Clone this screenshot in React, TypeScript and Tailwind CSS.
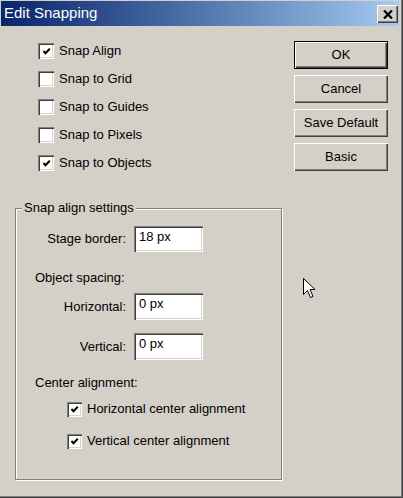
const sunken =
  "shadow-[inset_1px_1px_#808080,inset_2px_2px_#404040,inset_-1px_-1px_#ffffff,inset_-2px_-2px_#d4d0c8]";
const raised =
  "shadow-[inset_1px_1px_#ffffff,inset_-1px_-1px_#404040,inset_-2px_-2px_#808080]";

function Check({ checked, size }: { checked: boolean; size: number }) {
  return (
    <div
      className={`flex shrink-0 items-center justify-center bg-white ${sunken}`}
      style={{ width: size, height: size }}
    >
      {checked && (
        <svg width="9" height="9" viewBox="0 0 9 9">
          <polyline points="1.5,4 3.5,6.3 7.8,1.8" fill="none" stroke="#000" strokeWidth="2" />
        </svg>
      )}
    </div>
  );
}

function CheckRow({ label, checked }: { label: string; checked: boolean }) {
  return (
    <div className="flex h-[28px] items-center gap-[5px] pl-[23px]">
      <Check checked={checked} size={16} />
      <span>{label}</span>
    </div>
  );
}

function Field({ label, value, h }: { label: string; value: string; h: string }) {
  return (
    <div className="flex items-center">
      <span className="w-[110px] text-right">{label}</span>
      <div className={`ml-[8px] w-[69px] ${h} bg-white pl-[5px] pt-[3px] leading-[16px] ${sunken}`}>
        {value}
      </div>
    </div>
  );
}

function Btn({ label, isDefault }: { label: string; isDefault?: boolean }) {
  return (
    <div
      className={`flex h-[28px] w-[94px] items-center justify-center ${
        isDefault ? "border border-black" : ""
      }`}
    >
      <div className={`flex h-full w-full items-center justify-center bg-[#d4d0c8] ${raised}`}>
        {label}
      </div>
    </div>
  );
}

export default function App() {
  return (
    <div className="relative h-[498px] w-[403px] overflow-hidden bg-[#d4d0c8] pl-px pt-px font-['Liberation_Sans',Arial,sans-serif] text-[13px] text-black shadow-[inset_-1px_-1px_#404040,inset_-2px_-2px_#808080]">
      {/* title bar */}
      <div className="flex h-[25px] w-[398px] items-start bg-linear-to-r from-[#0a246a] to-[#a6caf0]">
        <span className="ml-[3px] mt-[3px] text-[15px] leading-[18px] text-white">Edit Snapping</span>
        <div
          className={`ml-auto mr-px mt-[4px] flex h-[18px] w-[21px] items-center justify-center bg-[#d4d0c8] ${raised}`}
        >
          <svg width="10" height="9" viewBox="0 0 10 9">
            <path d="M1 0.5 L9 8.5 M9 0.5 L1 8.5" stroke="#000" strokeWidth="2.2" />
          </svg>
        </div>
      </div>

      <div className="flex pl-[14px] pt-[11px]">
        {/* left column */}
        <div className="w-[268px]">
          <CheckRow label="Snap Align" checked />
          <CheckRow label="Snap to Grid" checked={false} />
          <CheckRow label="Snap to Guides" checked={false} />
          <CheckRow label="Snap to Pixels" checked={false} />
          <CheckRow label="Snap to Objects" checked />

          <div className="relative mt-[31px] h-[272px] w-[267px] border border-[#808080] shadow-[inset_1px_1px_#ffffff,1px_1px_#ffffff]">
            <span className="absolute left-[6px] top-[-9px] bg-[#d4d0c8] px-[2px] leading-[16px]">
              Snap align settings
            </span>
            <div className="pt-[17px]">
              <Field label="Stage border:" value="18 px" h="h-[26px]" />
              <div className="mt-[18px] h-[16px] pl-[19px] leading-[16px]">Object spacing:</div>
              <div className="mt-[7px]">
                <Field label="Horizontal:" value="0 px" h="h-[27px]" />
              </div>
              <div className="mt-[13px]">
                <Field label="Vertical:" value="0 px" h="h-[27px]" />
              </div>
              <div className="mt-[15px] h-[16px] pl-[19px] leading-[16px]">Center alignment:</div>
              <div className="mt-[2px] pl-[51px]">
                <div className="flex h-[32px] items-center gap-[5px]">
                  <Check checked size={15} />
                  <span>Horizontal center alignment</span>
                </div>
                <div className="flex h-[32px] items-center gap-[5px]">
                  <Check checked size={15} />
                  <span>Vertical center alignment</span>
                </div>
              </div>
            </div>
          </div>
        </div>

        {/* buttons */}
        <div className="ml-[11px] mt-[4px] flex flex-col gap-[6px]">
          <Btn label="OK" isDefault />
          <Btn label="Cancel" />
          <Btn label="Save Default" />
          <Btn label="Basic" />
        </div>
      </div>

      {/* mouse pointer */}
      <svg className="absolute left-[303px] top-[278px]" width="13" height="21" viewBox="0 0 13 21">
        <path
          d="M0.5 0.5 L0.5 16.5 L4.5 12.5 L7.5 19.5 L10 18.5 L7 11.5 L12 11.5 Z"
          fill="#fff"
          stroke="#000"
          strokeWidth="1"
        />
      </svg>
    </div>
  );
}
